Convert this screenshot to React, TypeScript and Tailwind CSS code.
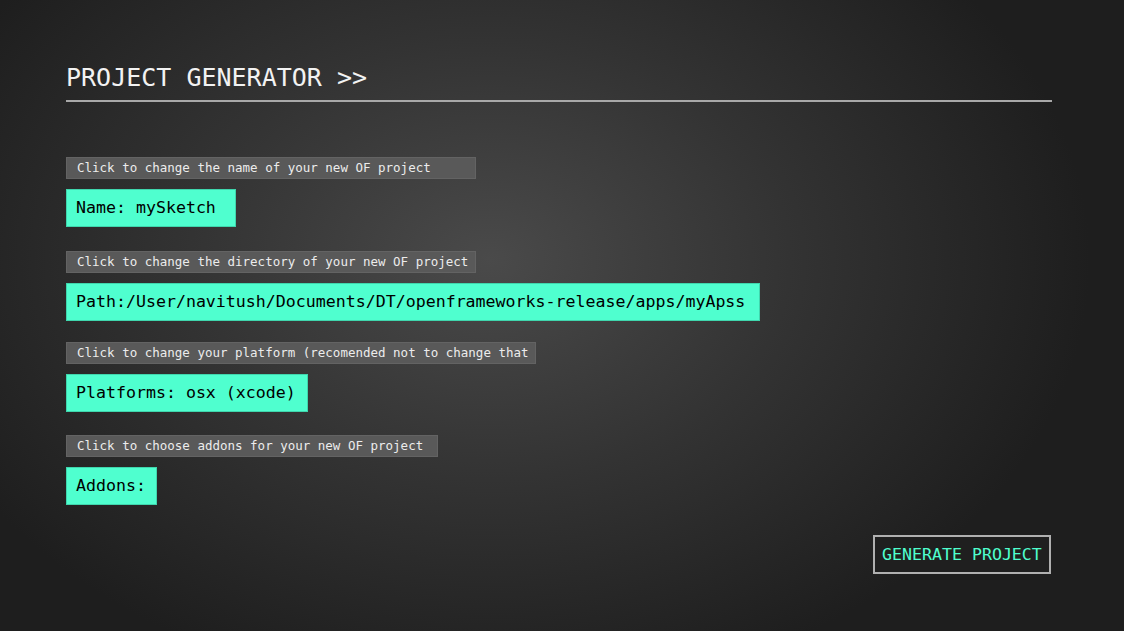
import React from 'react'

const mono = { fontFamily: '"DejaVu Sans Mono", "Liberation Mono", monospace' }

const fields = [
  {
    hint: 'Click to change the name of your new OF project',
    hintW: 'w-[410px]',
    value: 'Name: mySketch',
    valueW: 'w-[170px]',
    hintMt: 'mt-[55px]',
  },
  {
    hint: 'Click to change the directory of your new OF project',
    hintW: 'w-[410px]',
    value: 'Path:/User/navitush/Documents/DT/openframeworks-release/apps/myApss',
    valueW: 'w-[694px]',
    hintMt: 'mt-[24px]',
  },
  {
    hint: 'Click to change your platform (recomended not to change that',
    hintW: 'w-[470px]',
    value: 'Platforms: osx (xcode)',
    valueW: 'w-[242px]',
    hintMt: 'mt-[21px]',
  },
  {
    hint: 'Click to choose addons for your new OF project',
    hintW: 'w-[372px]',
    value: 'Addons:',
    valueW: 'w-[91px]',
    hintMt: 'mt-[23px]',
  },
]

function Field({ f }: { f: (typeof fields)[number] }) {
  return (
    <>
      <div
        className={`${f.hintMt} ${f.hintW} h-[22px] bg-[#595959] border border-[#636363] pl-[10px] text-[12.5px] leading-[20px] text-[#ececec] whitespace-nowrap`}
      >
        {f.hint}
      </div>
      <div
        className={`mt-[10px] ${f.valueW} h-[38px] bg-[#4fffcf] border border-[#3fd6ad] pl-[9px] text-[16.6px] leading-[36px] text-black whitespace-nowrap`}
      >
        {f.value}
      </div>
    </>
  )
}

export default function App() {
  return (
    <div
      style={mono}
      className="w-[1124px] h-[631px] overflow-hidden bg-[radial-gradient(ellipse_600px_440px_at_490px_260px,#4a4a4a_0%,#333333_50%,#1e1e1e_100%)] bg-[#1e1e1e]"
    >
      <div className="pl-[66px] pt-[63px] w-[1052px] flex flex-col">
        <div className="text-[25px] leading-[30px] text-[#f2f2f2] whitespace-nowrap">
          PROJECT GENERATOR &gt;&gt;
        </div>
        <div className="mt-[7px] h-[2px] bg-[#a8a8a8]" />
        {fields.map((f) => (
          <Field key={f.hint} f={f} />
        ))}
        <div className="mt-[30px] flex justify-end pr-[1px]">
          <div className="w-[178px] h-[39px] border-2 border-[#b0b0b0] bg-[#1f1f1f] text-[#4fffcf] text-[16.6px] leading-[35px] pl-[7px] whitespace-nowrap">
            GENERATE PROJECT
          </div>
        </div>
      </div>
    </div>
  )
}
